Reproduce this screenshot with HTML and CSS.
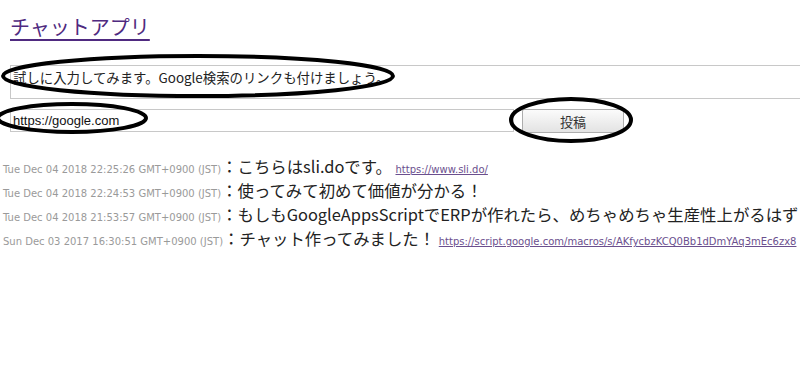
FILE: index.html
```html
<!DOCTYPE html>
<html lang="ja">
<head>
    <meta charset="UTF-8">
    <meta name="viewport" content="width=device-width, initial-scale=1.0">
    <title>チャットアプリ</title>
    <link rel="stylesheet" href="styles.css">
</head>
<body>

    <div class="page">
        <h1 class="title"><a href="#" class="title-link">チャットアプリ</a></h1>

        <div class="post-form">
            <textarea class="message-box" id="message">試しに入力してみます。Google検索のリンクも付けましょう。</textarea>
            <div class="form-row">
                <input type="text" class="url-box" id="url" value="https://google.com">
                <button class="post-btn">投稿</button>
            </div>
        </div>

        <ul class="messages">
            <li class="message">
                <span class="date">Tue Dec 04 2018 22:25:26 GMT+0900 (JST)</span><span class="text">：こちらはsli.doです。</span>
                <a href="#" class="link">https://www.sli.do/</a>
            </li>
            <li class="message">
                <span class="date">Tue Dec 04 2018 22:24:53 GMT+0900 (JST)</span><span class="text">：使ってみて初めて価値が分かる！</span>
            </li>
            <li class="message">
                <span class="date">Tue Dec 04 2018 21:53:57 GMT+0900 (JST)</span><span class="text">：もしもGoogleAppsScriptでERPが作れたら、めちゃめちゃ生産性上がるはず</span>
            </li>
            <li class="message">
                <span class="date">Sun Dec 03 2017 16:30:51 GMT+0900 (JST)</span><span class="text">：チャット作ってみました！</span>
                <a href="#" class="link">https://script.google.com/macros/s/AKfycbzKCQ0Bb1dDmYAq3mEc6zx8</a>
            </li>
        </ul>

        <!-- marker circles drawn on top of the screenshot -->
        <svg class="marks" width="800" height="387" viewBox="0 0 800 387">
            <ellipse cx="198" cy="76" rx="195" ry="20" />
            <ellipse cx="72" cy="118" rx="74" ry="14" />
            <ellipse cx="571" cy="120" rx="60" ry="21" />
        </svg>
    </div>

</body>
</html>
```

FILE: styles.css
```css
body {
    margin: 0;
    background: #fff;
    font-family: "Noto Sans CJK JP", sans-serif;
    overflow: hidden;
}
.page {
    position: relative;
    width: 800px;
    height: 387px;
    overflow: hidden;
}
.title {
    margin: 0;
    padding: 12px 0 0 10px;
    height: 28px;
    font-size: 20px;
    font-weight: normal;
    line-height: 30px;
}
.title-link {
    color: #4f2a80;
    text-decoration-thickness: 2px;
    text-underline-offset: 4px;
}
.post-form {
    padding: 25px 0 0 10px;
}
.message-box {
    display: block;
    box-sizing: border-box;
    width: 820px;
    height: 34px;
    margin: 0;
    padding: 3px 2px;
    border: 1px solid #c8c8c8;
    font-family: "Noto Sans CJK JP", monospace;
    font-size: 13.4px;
    line-height: 17px;
    color: #222;
    resize: none;
}
.form-row {
    display: flex;
    align-items: flex-start;
    gap: 8px;
    margin-top: 10px;
}
.url-box {
    box-sizing: border-box;
    width: 504px;
    height: 23px;
    margin: 0;
    padding: 1px 2px;
    border: 1px solid #c8c8c8;
    font-family: "Liberation Sans", Arial, sans-serif;
    font-size: 13px;
    color: #111;
}
.post-btn {
    box-sizing: border-box;
    width: 102px;
    height: 24px;
    margin: 0;
    padding: 0;
    border: 1px solid #adadad;
    border-radius: 2px;
    background: linear-gradient(#fbfbfb, #e3e3e3);
    font-family: "Noto Sans CJK JP", sans-serif;
    font-size: 13px;
    color: #333;
}
.messages {
    list-style: none;
    margin: 0;
    padding: 21px 0 0 3px;
}
.message {
    height: 24px;
    line-height: 24px;
    white-space: nowrap;
}
.date {
    font-family: "DejaVu Sans", Verdana, sans-serif;
    font-size: 10px;
    color: #9a9a9a;
}
.text {
    font-size: 16.4px;
    color: #222;
}
.link {
    font-family: "DejaVu Sans", Verdana, sans-serif;
    font-size: 10px;
    color: #6b4f8e;
}
.marks {
    position: absolute;
    left: 0;
    top: 0;
    pointer-events: none;
}
.marks ellipse {
    fill: none;
    stroke: #000;
    stroke-width: 4;
}
```
